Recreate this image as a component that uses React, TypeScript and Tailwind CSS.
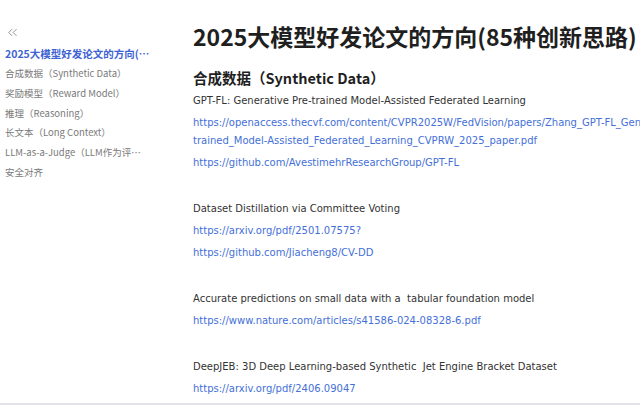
import { ChevronsLeft } from "lucide-react";

const navItems = [
  "合成数据（Synthetic Data）",
  "奖励模型（Reward Model）",
  "推理（Reasoning）",
  "长文本（Long Context）",
  "LLM-as-a-Judge（LLM作为评判者）",
  "安全对齐",
];

type Paper = { title: string; links: string[] };

const papers: Paper[] = [
  {
    title: "GPT-FL: Generative Pre-trained Model-Assisted Federated Learning",
    links: [
      "https://openaccess.thecvf.com/content/CVPR2025W/FedVision/papers/Zhang_GPT-FL_Generative_Pre-trained_Model-Assisted_Federated_Learning_CVPRW_2025_paper.pdf",
      "https://github.com/AvestimehrResearchGroup/GPT-FL",
    ],
  },
  {
    title: "Dataset Distillation via Committee Voting",
    links: ["https://arxiv.org/pdf/2501.07575?", "https://github.com/Jiacheng8/CV-DD"],
  },
  {
    title: "Accurate predictions on small data with a  tabular foundation model",
    links: ["https://www.nature.com/articles/s41586-024-08328-6.pdf"],
  },
  {
    title: "DeepJEB: 3D Deep Learning-based Synthetic  Jet Engine Bracket Dataset",
    links: ["https://arxiv.org/pdf/2406.09047"],
  },
];

const body = "font-['DejaVu_Sans','Noto_Sans_CJK_SC',sans-serif]";
const cjk = "font-['Noto_Sans_CJK_SC',sans-serif]";

export default function App() {
  return (
    <div className="flex h-[405px] w-[640px] overflow-hidden border-b-2 border-[#e4e4e8] bg-white">
      <aside className={`w-[150px] shrink-0 pl-[5px] pt-[25px] ${cjk}`}>
        <ChevronsLeft className="mb-[4px] h-[15px] w-[15px] text-[#8a8a8a]" strokeWidth={1.5} />
        <div className="truncate text-[10.5px] font-bold leading-[20px] text-[#3e64d4]">
          2025大模型好发论文的方向(85种创新思路)
        </div>
        {navItems.map((item) => (
          <div key={item} className="truncate text-[9.5px] leading-[19.8px] text-[#7a7a7a]">
            {item}
          </div>
        ))}
      </aside>

      <main className="w-[620px] shrink-0 pl-[43px] pt-[20px]">
        <h1 className={`whitespace-nowrap ${cjk} text-[23px] font-bold leading-[32px] text-[#1f1f1f]`}>
          2025大模型好发论文的方向(85种创新思路)
        </h1>
        <h2 className={`mt-[16px] ${cjk} text-[14.5px] font-bold leading-[20px] text-[#1f1f1f]`}>
          合成数据（Synthetic Data）
        </h2>
        <div className={`mt-[4px] ${body} text-[10px] text-[#333]`}>
          {papers.map((p, i) => (
            <div key={p.title} className={i > 0 ? "mt-[28px]" : ""}>
              <p className="whitespace-pre leading-[18px]">{p.title}</p>
              {p.links.map((l) => (
                <p key={l} className="mt-[4px] leading-[18px] text-[#4470d8]">
                  {l}
                </p>
              ))}
            </div>
          ))}
        </div>
      </main>
    </div>
  );
}
